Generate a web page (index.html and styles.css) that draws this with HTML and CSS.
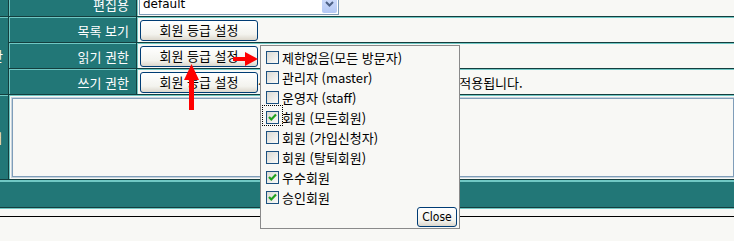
FILE: index.html
```html
<!DOCTYPE html>
<html lang="ko">

<head>
    <meta charset="UTF-8">
    <title>게시판 권한 설정</title>
    <link rel="stylesheet" href="styles.css">
</head>

<body>
    <table class="form">
        <tr>
            <td class="side"></td>
            <td class="label">편집용</td>
            <td class="value">
                <div class="select">
                    <span>default</span>
                    <span class="select-arrow">
                        <svg width="9" height="6" viewBox="0 0 9 6">
                            <polyline points="1,1 4.5,4.5 8,1" fill="none" stroke="#4d6185" stroke-width="2" />
                        </svg>
                    </span>
                </div>
            </td>
        </tr>
        <tr>
            <td class="side" rowspan="3">
                <div class="side-clip">접근 권한</div>
            </td>
            <td class="label">목록 보기</td>
            <td class="value"><button class="xp-btn grade-btn">회원 등급 설정</button></td>
        </tr>
        <tr>
            <td class="label">읽기 권한</td>
            <td class="value"><button class="xp-btn grade-btn">회원 등급 설정</button></td>
        </tr>
        <tr>
            <td class="label">쓰기 권한</td>
            <td class="value">
                <button class="xp-btn grade-btn">회원 등급 설정</button><span class="note">선택한 회원 등급에 한해 쓰기 권한이 적용됩니다.</span>
            </td>
        </tr>
        <tr>
            <td class="side">
                <div class="side-clip side-clip-low">안내</div>
            </td>
            <td class="editor" colspan="2"><textarea></textarea></td>
        </tr>
        <tr>
            <td class="foot" colspan="3"></td>
        </tr>
    </table>

    <div class="rule"></div>

    <!-- 회원 등급 선택 팝업 -->
    <div class="grade-popup">
        <label class="item"><span class="check"></span>제한없음(모든 방문자)</label>
        <label class="item"><span class="check"></span>관리자 (master)</label>
        <label class="item"><span class="check"></span>운영자 (staff)</label>
        <label class="item"><span class="check on focus"><svg viewBox="0 0 11 11"><polyline points="2,5 4.3,7.5 9,2.5" /></svg></span>회원 (모든회원)</label>
        <label class="item"><span class="check"></span>회원 (가입신청자)</label>
        <label class="item"><span class="check"></span>회원 (탈퇴회원)</label>
        <label class="item"><span class="check on"><svg viewBox="0 0 11 11"><polyline points="2,5 4.3,7.5 9,2.5" /></svg></span>우수회원</label>
        <label class="item"><span class="check on"><svg viewBox="0 0 11 11"><polyline points="2,5 4.3,7.5 9,2.5" /></svg></span>승인회원</label>
        <div class="popup-foot">
            <button class="xp-btn close-btn">Close</button>
        </div>
    </div>

    <!-- 빨간 화살표 표시 -->
    <svg class="marks" width="734" height="241" viewBox="0 0 734 241">
        <rect x="189" y="79" width="5" height="31" fill="#ff0000" />
        <polygon points="191.5,64 184,80 199,80" fill="#ff0000" />
        <rect x="233" y="57" width="13" height="4" fill="#ff0000" />
        <polygon points="258,59 245,52 245,66" fill="#ff0000" />
    </svg>
</body>

</html>
```

FILE: styles.css
```css
* {
    margin: 0;
}

body {
    background-color: #f8f8f5;
    font-family: "Noto Sans CJK KR", "Liberation Sans", sans-serif;
    font-size: 13px;
    color: #000;
    overflow: hidden;
}

.form {
    width: calc(100% + 2px);
    margin-top: -10px;
    margin-left: -1px;
    border-collapse: separate;
    border-spacing: 1px;
    background-color: #143e3e;
    border-bottom: 1px solid #70c8c4;
    table-layout: fixed;
}

.form td {
    box-sizing: border-box;
    height: 25px;
    padding: 0;
    border-top: 1px solid #70c8c4;
    border-left: 1px solid #70c8c4;
    vertical-align: middle;
}

.form td.side {
    width: 8px;
    border-left: none;
    background-color: #227777;
}

.side-clip {
    width: 8px;
    overflow: hidden;
    display: flex;
    justify-content: flex-end;
    white-space: nowrap;
    color: #fff;
    padding-right: 5px;
    box-sizing: border-box;
    line-height: 14px;
}

.side-clip-low {
    padding-right: 6px;
}

.form td.label {
    width: 127px;
    background-color: #227777;
    color: #fff;
    text-align: right;
    padding-right: 7px;
    white-space: nowrap;
}

.form td.value {
    background-color: #f8f8f5;
    padding-left: 2px;
    white-space: nowrap;
}

.select {
    display: flex;
    align-items: center;
    width: 200px;
    height: 21px;
    margin-left: -1px;
    padding-left: 3px;
    box-sizing: border-box;
    border: 1px solid #7f9db9;
    background-color: #fff;
    font-family: "DejaVu Sans", sans-serif;
    font-size: 12px;
}

.select-arrow {
    display: flex;
    align-items: center;
    justify-content: center;
    width: 15px;
    height: 17px;
    margin-left: auto;
    margin-right: 1px;
    border-radius: 2px;
    background: linear-gradient(#d2dffc, #b4c8f5);
}

.xp-btn {
    border: 1px solid #003c74;
    border-radius: 3px;
    background: linear-gradient(#ffffff, #f3f3ee 70%, #dcd7cc);
    color: #000;
    padding: 0;
    cursor: pointer;
}

.grade-btn {
    width: 118px;
    height: 21px;
    font-family: "Noto Sans CJK KR", sans-serif;
    font-size: 13px;
    line-height: 18px;
    vertical-align: middle;
}

.note {
    vertical-align: middle;
}

.form td.editor {
    height: 84px;
    background-color: #f8f8f5;
    padding: 2px 0 2px 2px;
}

.editor textarea {
    display: block;
    width: 100%;
    height: 79px;
    box-sizing: border-box;
    border: 1px solid #7f9db9;
    outline: 1px solid #c6d4de;
    outline-offset: 0;
    background-color: #f8f8f5;
    resize: none;
}

.form td.foot {
    height: 27px;
    border-left: none;
    border-top: 2px solid #70c8c4;
    background-color: #227777;
}

.rule {
    height: 1px;
    margin-top: 7px;
    background-color: #000;
}

.grade-popup {
    position: absolute;
    left: 260px;
    top: 45px;
    width: 200px;
    height: 184px;
    box-sizing: border-box;
    padding: 1px 2px 0 5px;
    border: 1px solid #8a8a8a;
    background-color: #f8f8f5;
}

.item {
    display: flex;
    align-items: center;
    height: 20px;
    white-space: nowrap;
}

.check {
    position: relative;
    display: flex;
    align-items: center;
    justify-content: center;
    width: 13px;
    height: 13px;
    margin-right: 3px;
    box-sizing: border-box;
    border: 1px solid #1c5180;
    background: linear-gradient(135deg, #d9d9d3, #fbfbf9);
}

.check svg {
    width: 11px;
    height: 11px;
}

.check polyline {
    fill: none;
    stroke: #21a121;
    stroke-width: 2.2;
}

.focus::after {
    content: "";
    position: absolute;
    left: -5px;
    top: -7px;
    width: 19px;
    height: 19px;
    border: 1px dotted #000;
}

.popup-foot {
    display: flex;
    justify-content: flex-end;
}

.close-btn {
    width: 40px;
    height: 20px;
    font-family: "DejaVu Sans Condensed", "DejaVu Sans", sans-serif;
    font-size: 12px;
}

.marks {
    position: absolute;
    left: 0;
    top: 0;
    pointer-events: none;
}
```
